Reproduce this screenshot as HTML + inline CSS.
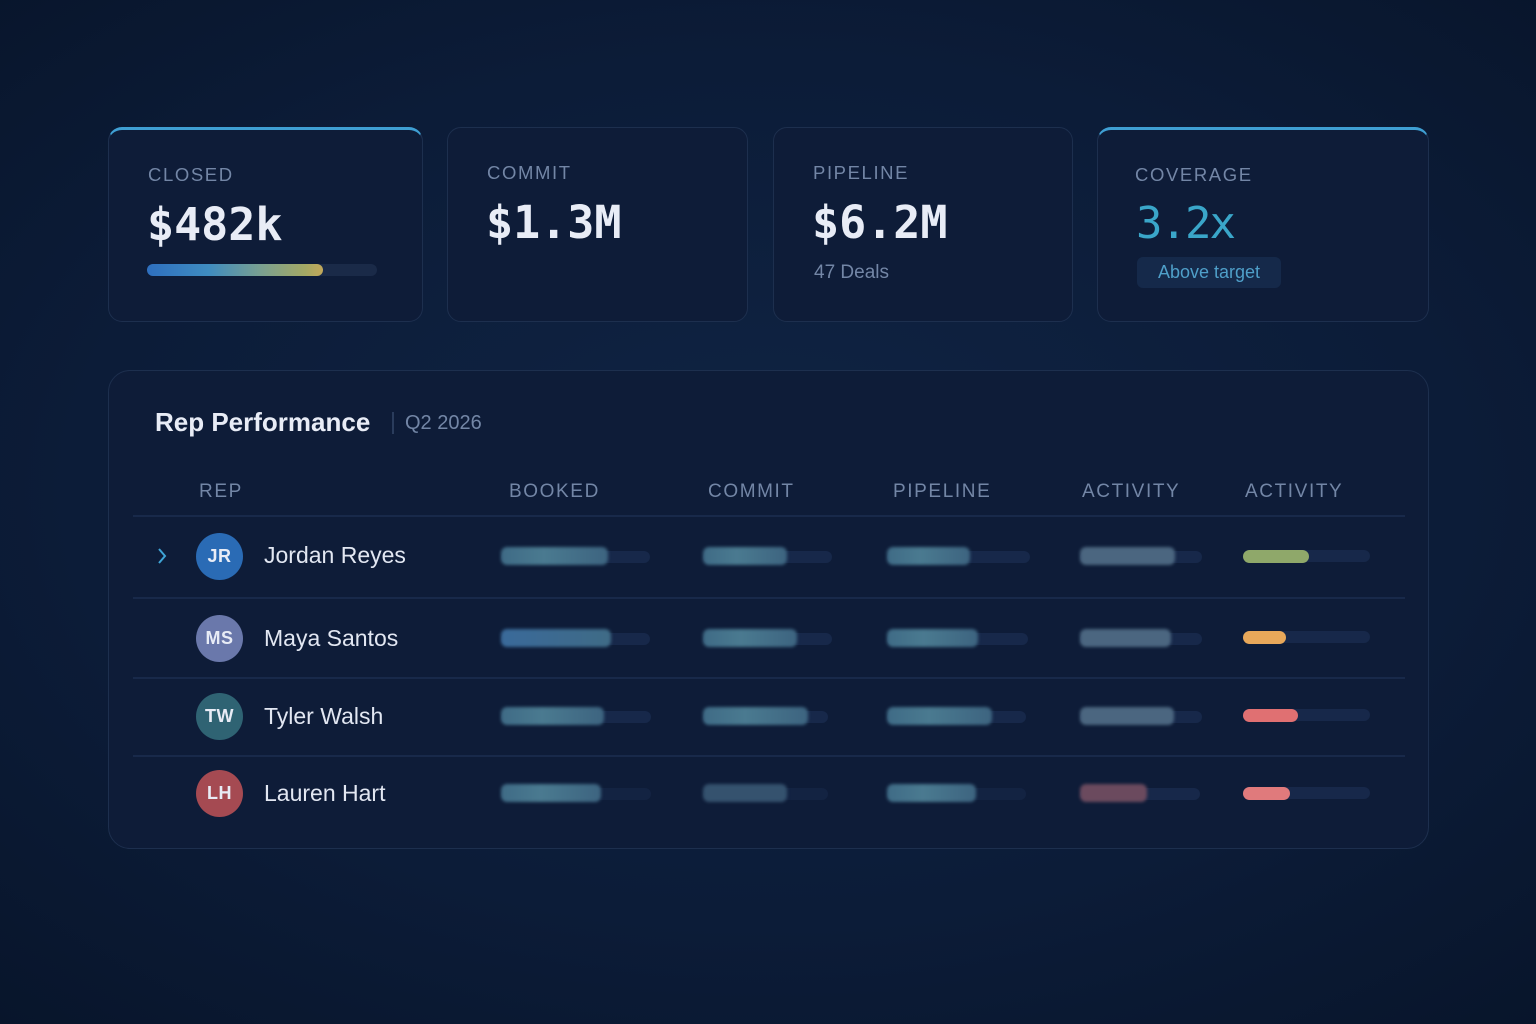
<!DOCTYPE html>
<html><head><style>
*{margin:0;padding:0;box-sizing:border-box}
body{width:1536px;height:1024px;overflow:hidden;font-family:"Liberation Sans",sans-serif;
background:radial-gradient(ellipse 75% 70% at 50% 48%,#0f2444 0%,#0c1c38 60%,#08152b 100%);position:relative}
.card{position:absolute;top:127px;height:195px;background:#0e1c38;border:1.5px solid #1d2f4e;border-radius:14px}
.card.hl{border-top:3px solid #3f9fd3}
.lbl{position:absolute;left:39px;top:34px;font-size:18.5px;letter-spacing:1.6px;color:#7386a6}
.val{position:absolute;left:38px;top:68px;font-family:"DejaVu Sans Mono",monospace;font-weight:bold;font-size:45px;color:#e8ecf6;letter-spacing:0px}
.sub{position:absolute;left:40px;top:134px;font-size:19px;color:#7386a6}
.panel{position:absolute;left:108px;top:370px;width:1321px;height:479px;background:#0e1c38;border:1.5px solid #1d2f4e;border-radius:22px}
.th{position:absolute;top:481px;font-size:19px;letter-spacing:1.6px;color:#7386a6}
.sep{position:absolute;left:133px;width:1272px;height:2px;background:#18294a}
.av{position:absolute;left:196px;width:47px;height:47px;border-radius:50%;color:#e8ecf6;font-size:18px;font-weight:bold;display:flex;align-items:center;justify-content:center;letter-spacing:.5px}
.nm{position:absolute;left:264px;font-size:23px;color:#e2e7f2}
.tr{position:absolute;height:12px;border-radius:6px;background:#17284a}
.f{position:absolute;height:18px;border-radius:6px;background:linear-gradient(90deg,#3f6b86,#4a7a90 40%,#3d6480);filter:blur(1.5px)}
.s{position:absolute;height:13px;border-radius:7px}
</style></head><body>
<div class="card hl" style="left:108px;width:315px"><div class="lbl">CLOSED</div><div class="val">$482k</div>
<div style="position:absolute;left:38px;top:134px;width:230px;height:12px;border-radius:6px;background:#1a2a48"></div>
<div style="position:absolute;left:38px;top:134px;width:176px;height:12px;border-radius:6px;background:linear-gradient(90deg,#2e6fbf,#3f8cc0 35%,#7aa090 65%,#a4a864 90%,#c2a85a)"></div></div>
<div class="card" style="left:447px;width:301px"><div class="lbl">COMMIT</div><div class="val">$1.3M</div></div>
<div class="card" style="left:773px;width:300px"><div class="lbl">PIPELINE</div><div class="val">$6.2M</div><div class="sub">47 Deals</div></div>
<div class="card hl" style="left:1097px;width:332px"><div class="lbl" style="left:37px">COVERAGE</div><div class="val" style="color:#3aa6c9;font-weight:normal;font-size:44px;letter-spacing:-2px">3.2x</div>
<div style="position:absolute;left:39px;top:127px;width:144px;height:31px;border-radius:6px;background:#15294a;color:#4f9fc9;font-size:18px;text-align:center;line-height:31px">Above target</div></div>

<div class="panel"></div>
<div style="position:absolute;left:155px;top:407px;font-size:26px;font-weight:bold;color:#e8ecf6">Rep Performance</div>
<div style="position:absolute;left:392px;top:412px;width:2px;height:22px;background:#2a3c5c"></div>
<div style="position:absolute;left:405px;top:412px;font-size:20px;color:#7386a6">Q2 2026</div>
<div class="th" style="left:199px">REP</div><div class="th" style="left:509px">BOOKED</div><div class="th" style="left:708px">COMMIT</div>
<div class="th" style="left:893px">PIPELINE</div><div class="th" style="left:1082px">ACTIVITY</div><div class="th" style="left:1245px">ACTIVITY</div>
<div class="sep" style="top:515px"></div><div class="sep" style="top:597px"></div><div class="sep" style="top:677px"></div><div class="sep" style="top:755px"></div>
<svg style="position:absolute;left:155px;top:546px" width="14" height="20"><path d="M4 3l6 7-6 7" stroke="#3fa4d6" stroke-width="2" fill="none"/></svg>
<div class="av" style="top:533px;background:#2a6bb5">JR</div><div class="nm" style="top:542px">Jordan Reyes</div>
<div class="av" style="top:615px;background:#6a78ab">MS</div><div class="nm" style="top:625px">Maya Santos</div>
<div class="av" style="top:693px;background:#2f6373">TW</div><div class="nm" style="top:703px">Tyler Walsh</div>
<div class="av" style="top:770px;background:#a54a52">LH</div><div class="nm" style="top:780px">Lauren Hart</div>

<div class="tr" style="left:501px;top:551px;width:149px"></div><div class="f" style="left:501px;top:547px;width:107px"></div>
<div class="tr" style="left:703px;top:551px;width:129px"></div><div class="f" style="left:703px;top:547px;width:84px"></div>
<div class="tr" style="left:887px;top:551px;width:143px"></div><div class="f" style="left:887px;top:547px;width:83px"></div>
<div class="tr" style="left:1080px;top:551px;width:122px"></div><div class="f" style="left:1080px;top:547px;width:95px;background:#4b6680"></div>
<div class="tr" style="left:1243px;top:550px;width:127px"></div><div class="s" style="left:1243px;top:550px;width:66px;background:#8fa86a"></div>
<div class="tr" style="left:501px;top:633px;width:149px"></div><div class="f" style="left:501px;top:629px;width:110px;background:linear-gradient(90deg,#3a6a9a,#3f6b86)"></div>
<div class="tr" style="left:703px;top:633px;width:129px"></div><div class="f" style="left:703px;top:629px;width:94px"></div>
<div class="tr" style="left:887px;top:633px;width:141px"></div><div class="f" style="left:887px;top:629px;width:91px"></div>
<div class="tr" style="left:1080px;top:633px;width:122px"></div><div class="f" style="left:1080px;top:629px;width:91px;background:#4b6680"></div>
<div class="tr" style="left:1243px;top:631px;width:127px"></div><div class="s" style="left:1243px;top:631px;width:43px;background:#e8a85a"></div>
<div class="tr" style="left:501px;top:711px;width:150px"></div><div class="f" style="left:501px;top:707px;width:103px"></div>
<div class="tr" style="left:703px;top:711px;width:125px"></div><div class="f" style="left:703px;top:707px;width:105px"></div>
<div class="tr" style="left:887px;top:711px;width:139px"></div><div class="f" style="left:887px;top:707px;width:105px"></div>
<div class="tr" style="left:1080px;top:711px;width:122px"></div><div class="f" style="left:1080px;top:707px;width:94px;background:#4b6680"></div>
<div class="tr" style="left:1243px;top:709px;width:127px"></div><div class="s" style="left:1243px;top:709px;width:55px;background:#e07072"></div>
<div class="tr" style="left:501px;top:788px;width:150px;opacity:.6"></div><div class="f" style="left:501px;top:784px;width:100px"></div>
<div class="tr" style="left:703px;top:788px;width:125px;opacity:.6"></div><div class="f" style="left:703px;top:784px;width:84px;background:#35526e"></div>
<div class="tr" style="left:887px;top:788px;width:139px;opacity:.6"></div><div class="f" style="left:887px;top:784px;width:89px"></div>
<div class="tr" style="left:1080px;top:788px;width:120px"></div><div class="f" style="left:1080px;top:784px;width:67px;background:#6b4a5e"></div>
<div class="tr" style="left:1243px;top:787px;width:127px"></div><div class="s" style="left:1243px;top:787px;width:47px;background:#e07a7c"></div>
</body></html>
